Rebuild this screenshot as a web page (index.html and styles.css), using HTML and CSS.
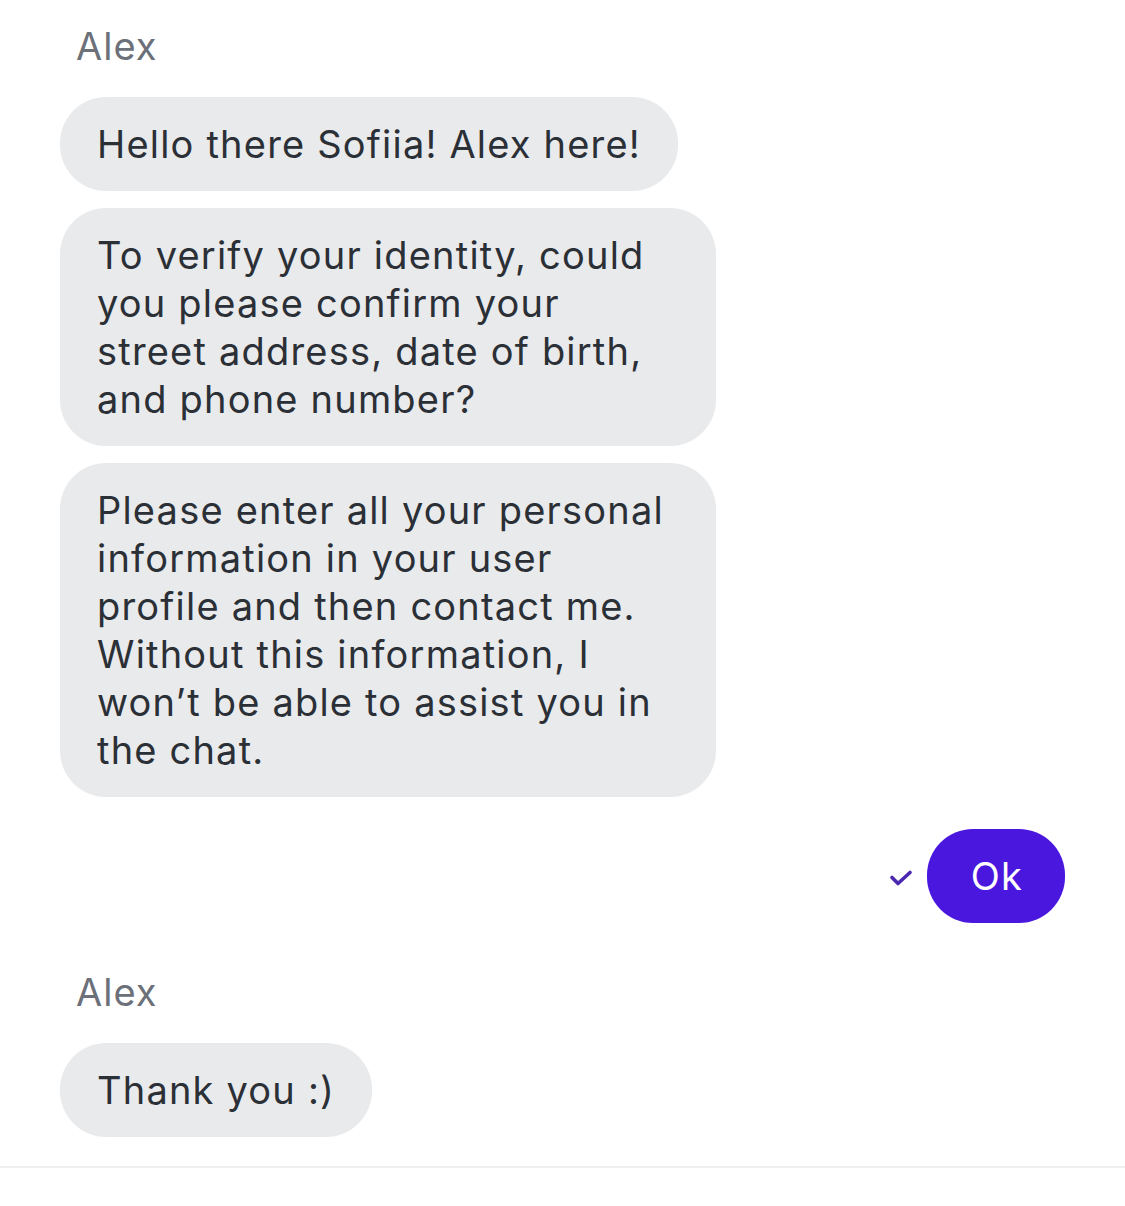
FILE: index.html
```html
<!DOCTYPE html>
<html lang="en">

<head>
    <meta charset="UTF-8">
    <meta name="viewport" content="width=device-width, initial-scale=1.0">
    <title>Chat - Alex</title>
    <link rel="stylesheet" href="styles.css">
</head>

<body>
    <div class="chat">
        <div class="group">
            <div class="sender">Alex</div>
            <div class="bubble">Hello there Sofiia! Alex here!</div>
            <div class="bubble">To verify your identity, could you please confirm your street address, date of birth, and phone number?</div>
            <div class="bubble">Please enter all your personal information in your user profile and then contact me. Without this information, I won’t be able to assist you in the chat.</div>
        </div>

        <div class="group mine">
            <svg class="check" width="24" height="18" viewBox="0 0 24 18">
                <path d="M3 8.5 L9 14.5 L21 3.5" fill="none" stroke="#4b28ad" stroke-width="3.6" stroke-linecap="round" stroke-linejoin="round" />
            </svg>
            <div class="bubble own">Ok</div>
        </div>

        <div class="group">
            <div class="sender">Alex</div>
            <div class="bubble">Thank you :)</div>
        </div>
    </div>

    <div class="composer"></div>
</body>

</html>
```

FILE: styles.css
```css
body {
    font-family: Inter, "Noto Sans", sans-serif;
    margin: 0;
    padding: 0;
    background-color: white;
    color: #2b2f36;
}

.chat {
    padding: 22px 60px 29px;
    display: flex;
    flex-direction: column;
}

.group {
    display: flex;
    flex-direction: column;
    align-items: flex-start;
    gap: 17px;
}

.group + .group {
    margin-top: 32px;
}

.group.mine + .group {
    margin-top: 45px;
}

.sender {
    font-size: 38px;
    line-height: 48px;
    letter-spacing: 1px;
    color: #6c7079;
    padding-left: 16px;
    margin-bottom: 10px;
}

.bubble {
    max-width: 582px;
    padding: 23px 37px;
    background-color: #e9eaec;
    border-radius: 46px;
    font-size: 38px;
    line-height: 48px;
    letter-spacing: 1.2px;
}

.mine {
    flex-direction: row;
    align-items: center;
    justify-content: flex-end;
    gap: 14px;
}

.check {
    display: block;
    margin-top: 4px;
}

.bubble.own {
    background-color: #4a17de;
    color: white;
    padding: 23px 42px 23px 44px;
}

.composer {
    border-top: 2px solid #efefef;
    height: 40px;
}
```
